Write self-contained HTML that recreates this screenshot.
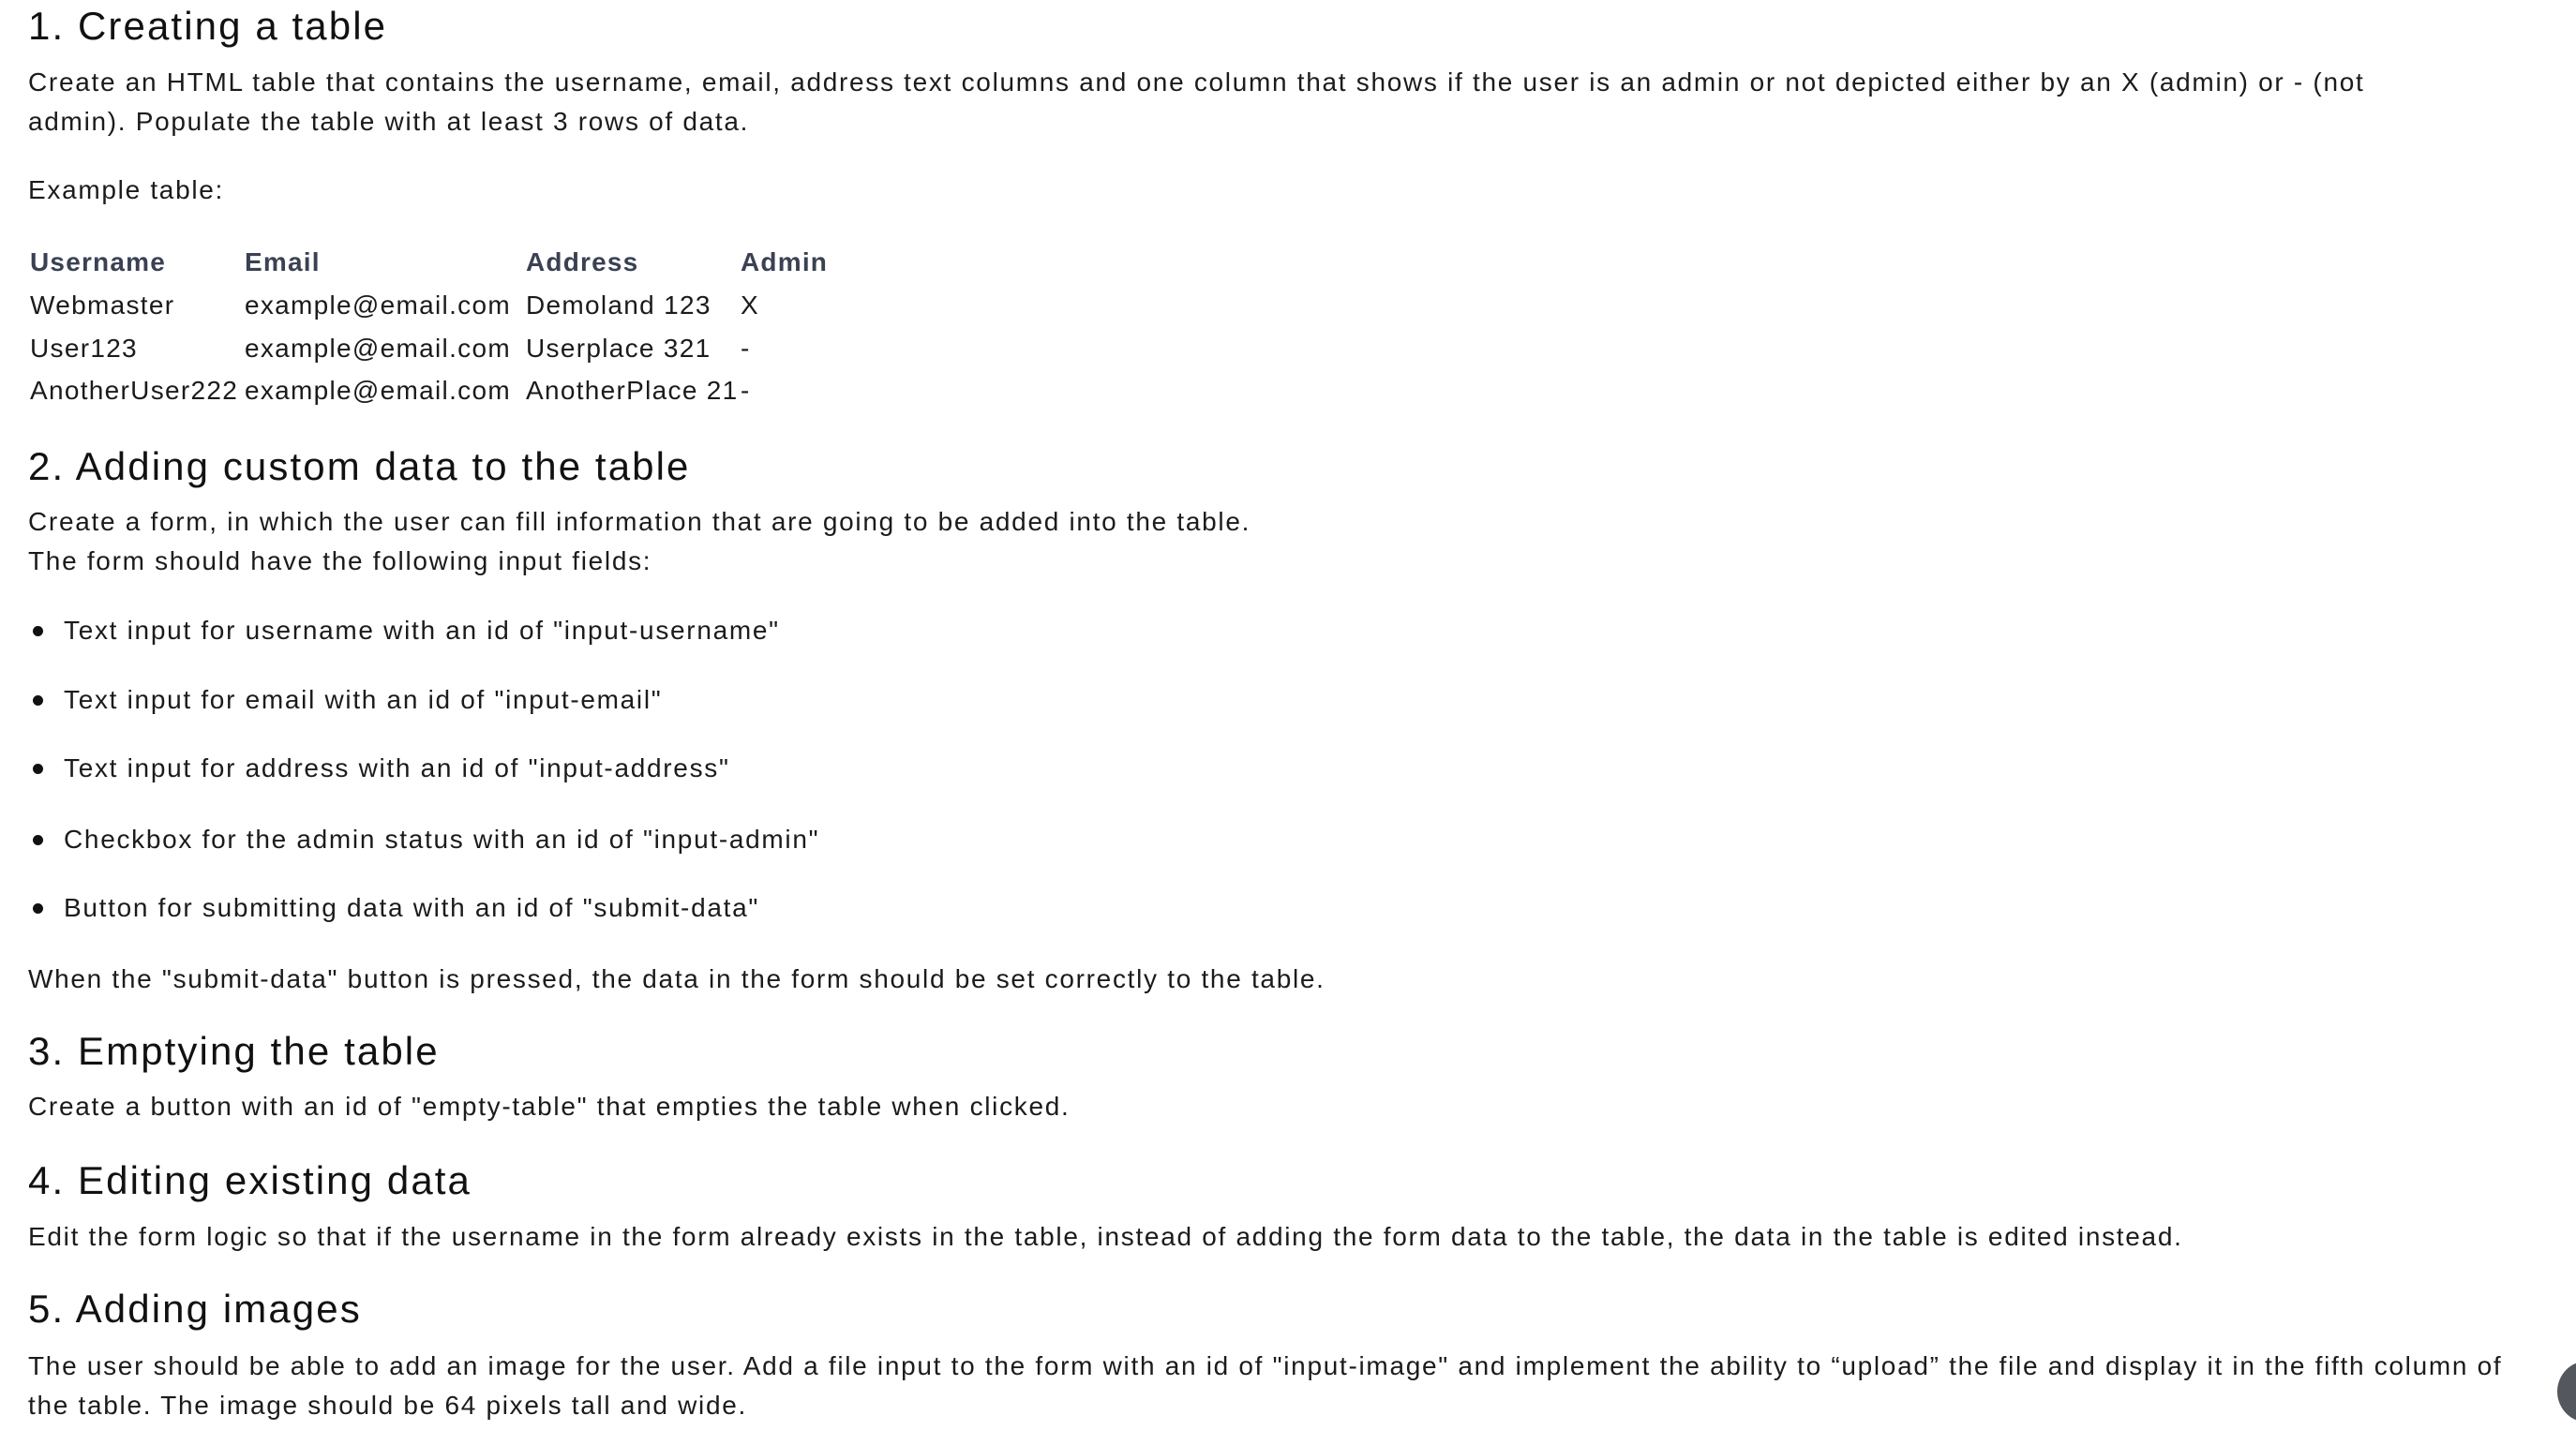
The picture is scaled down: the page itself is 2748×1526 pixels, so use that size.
<!DOCTYPE html>
<html><head><meta charset="utf-8"><style>
html,body{margin:0;padding:0;background:#fff;width:2748px;height:1526px;overflow:hidden;position:relative}
.l{position:absolute;left:30px;white-space:nowrap;font-family:"Liberation Sans",sans-serif;color:#1b1b1b;font-size:28px;line-height:42px;height:42px;letter-spacing:1.7px}
.h{font-size:42px;line-height:56px;height:56px;letter-spacing:2.1px;color:#111}
.th{font-weight:bold;color:#3a4152;letter-spacing:1.2px}
.dot{position:absolute;left:35px;width:11px;height:11px;border-radius:50%;background:#111}
.c{position:absolute;left:2728px;top:1452px;width:66px;height:66px;border-radius:50%;background:#54575e}
</style></head><body>
<div class="l h" style="top:0px">1. Creating a table</div>
<div class="l" style="top:67px">Create an HTML table that contains the username, email, address text columns and one column that shows if the user is an admin or not depicted either by an X (admin) or - (not</div>
<div class="l" style="top:109px">admin). Populate the table with at least 3 rows of data.</div>
<div class="l" style="top:182px">Example table:</div>

<div class="l th" style="top:259px;left:32px">Username</div>
<div class="l th" style="top:259px;left:261px">Email</div>
<div class="l th" style="top:259px;left:561px">Address</div>
<div class="l th" style="top:259px;left:790px">Admin</div>
<div class="l" style="top:305px;left:32px;letter-spacing:1.3px">Webmaster</div>
<div class="l" style="top:305px;left:261px;letter-spacing:1.3px">example@email.com</div>
<div class="l" style="top:305px;left:561px;letter-spacing:1.3px">Demoland 123</div>
<div class="l" style="top:305px;left:790px">X</div>
<div class="l" style="top:351px;left:32px;letter-spacing:1.3px">User123</div>
<div class="l" style="top:351px;left:261px;letter-spacing:1.3px">example@email.com</div>
<div class="l" style="top:351px;left:561px;letter-spacing:1.3px">Userplace 321</div>
<div class="l" style="top:351px;left:790px">-</div>
<div class="l" style="top:396px;left:32px;letter-spacing:1.3px">AnotherUser222</div>
<div class="l" style="top:396px;left:261px;letter-spacing:1.3px">example@email.com</div>
<div class="l" style="top:396px;left:561px;letter-spacing:1.3px">AnotherPlace 21</div>
<div class="l" style="top:396px;left:790px">-</div>

<div class="l h" style="top:470px">2. Adding custom data to the table</div>
<div class="l" style="top:536px">Create a form, in which the user can fill information that are going to be added into the table.</div>
<div class="l" style="top:578px">The form should have the following input fields:</div>
<div class="dot" style="top:668px"></div><div class="l" style="top:652px;left:68px">Text input for username with an id of "input-username"</div>
<div class="dot" style="top:742px"></div><div class="l" style="top:726px;left:68px">Text input for email with an id of "input-email"</div>
<div class="dot" style="top:815px"></div><div class="l" style="top:799px;left:68px">Text input for address with an id of "input-address"</div>
<div class="dot" style="top:891px"></div><div class="l" style="top:875px;left:68px">Checkbox for the admin status with an id of "input-admin"</div>
<div class="dot" style="top:964px"></div><div class="l" style="top:948px;left:68px">Button for submitting data with an id of "submit-data"</div>
<div class="l" style="top:1024px">When the "submit-data" button is pressed, the data in the form should be set correctly to the table.</div>

<div class="l h" style="top:1094px">3. Emptying the table</div>
<div class="l" style="top:1160px">Create a button with an id of "empty-table" that empties the table when clicked.</div>
<div class="l h" style="top:1232px">4. Editing existing data</div>
<div class="l" style="top:1299px">Edit the form logic so that if the username in the form already exists in the table, instead of adding the form data to the table, the data in the table is edited instead.</div>
<div class="l h" style="top:1369px">5. Adding images</div>
<div class="l" style="top:1437px">The user should be able to add an image for the user. Add a file input to the form with an id of "input-image" and implement the ability to “upload” the file and display it in the fifth column of</div>
<div class="l" style="top:1479px">the table. The image should be 64 pixels tall and wide.</div>
<div class="c"></div>
</body></html>
